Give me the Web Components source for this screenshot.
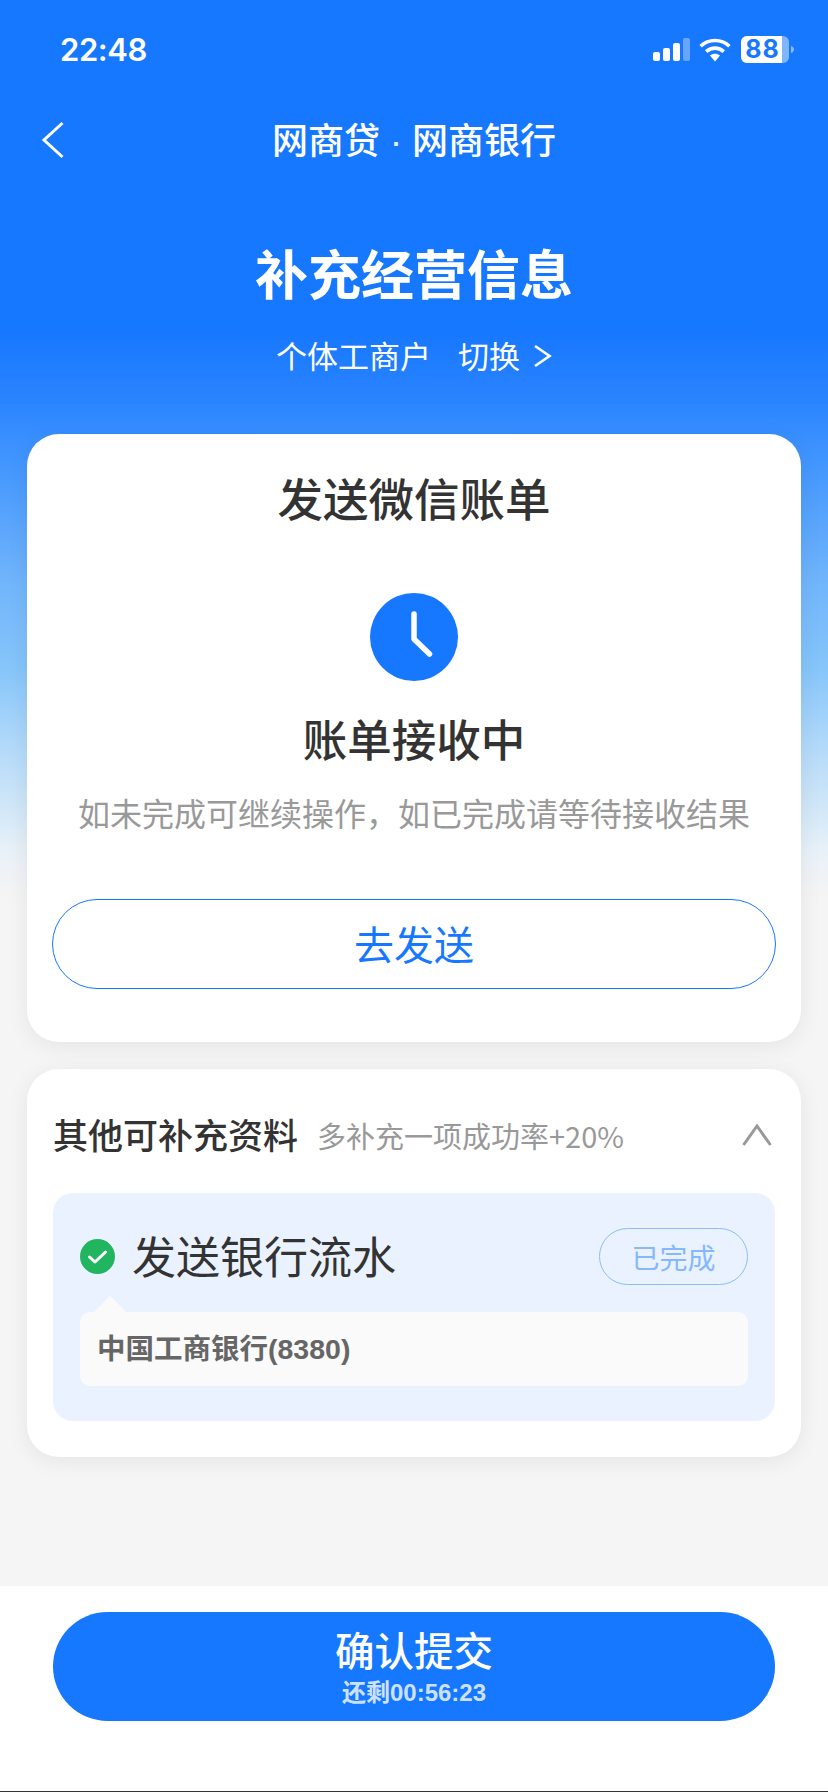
<!DOCTYPE html>
<html lang="zh"><head><meta charset="utf-8"><title>补充经营信息</title>
<style>
html,body{margin:0;padding:0;height:1792px;overflow:hidden}
body{font-family:"Noto Sans CJK SC","Liberation Sans",sans-serif;color:#333;background:#f5f5f5}
</style></head><body>
<app-page>
  <status-bar slot="top" time="22:48" battery="88"></status-bar>
  <nav-bar slot="top">网商贷 · 网商银行</nav-bar>
  <page-hero slot="top" heading="补充经营信息" type="个体工商户" action="切换"></page-hero>
  <bill-card heading="发送微信账单" state="账单接收中" hint="如未完成可继续操作，如已完成请等待接收结果" action="去发送"></bill-card>
  <extras-card heading="其他可补充资料" note="多补充一项成功率+20%">
    <done-item heading="发送银行流水" badge="已完成" detail="中国工商银行(8380)"></done-item>
  </extras-card>
  <submit-bar slot="bottom" label="确认提交" countdown="还剩00:56:23"></submit-bar>
</app-page>
<script>
function def(name, html){
  customElements.define(name, class extends HTMLElement{
    connectedCallback(){
      if(this.shadowRoot) return;
      const a={}; for(const at of this.attributes) a[at.name]=at.value;
      this.attachShadow({mode:'open'}).innerHTML = html.replace(/\{\{(\w+)\}\}/g,(m,k)=>a[k]||'');
    }
  });
}
def('app-page',`<style>
:host{display:flex;flex-direction:column;width:828px;height:1792px;
background:linear-gradient(180deg,#1677ff 0,#1677ff 330px,#2a84ff 400px,#3a90ff 440px,#72b6fb 586px,#85c5fa 667px,#b4dafa 749px,#c8e3f8 790px,#e8f1f8 851px,#f4f4f5 892px,#f5f5f5 905px,#f5f5f5 100%)}
.main{display:flex;flex-direction:column;gap:27px;padding:0 27px;flex:none}
::slotted([slot=bottom]){margin-top:auto}
</style><slot name="top"></slot><div class="main"><slot></slot></div><slot name="bottom"></slot>`);

def('status-bar',`<style>
:host{display:flex;align-items:center;justify-content:space-between;height:100px;padding:0 34px 0 60px;box-sizing:border-box;color:#fff}
.t{font:600 31px/40px Inter,"Liberation Sans",sans-serif;letter-spacing:-.4px}
.r{display:flex;align-items:center;margin-top:-1px}
svg{display:block}
.b{position:relative;width:53px;height:27px;margin-left:10px}
.b span{position:absolute;left:0;top:0;width:48px;height:27px;display:flex;align-items:center;justify-content:center;font:700 25px/27px Inter,"Liberation Sans",sans-serif;color:#1677ff;letter-spacing:1px;padding-right:5px;box-sizing:border-box}
</style><div class="t">{{time}}</div><div class="r">
<svg width="37" height="23" viewBox="0 0 37 23" fill="#fff"><rect x="0" y="14" width="7" height="9" rx="2"/><rect x="10" y="10" width="7" height="13" rx="2"/><rect x="20" y="5" width="7" height="18" rx="2"/><rect x="30" y="0" width="7" height="23" rx="2" fill-opacity=".35"/></svg>
<svg style="margin-left:9px" width="32" height="24" viewBox="0 0 32 24"><g fill="none" stroke="#fff" stroke-width="3.6"><path d="M1.6 8.2C9.6.6 22.4.6 30.4 8.2"/><path d="M7.2 13.6c5-4.6 12.6-4.6 17.6 0"/></g><path d="M11 17.6c3-2.4 7-2.4 10 0L16 23.5z" fill="#fff"/></svg>
<div class="b"><svg width="53" height="27" viewBox="0 0 53 27"><rect width="48" height="27" rx="6" fill="#fff" fill-opacity=".45"/><path d="M6 0h35v27H6a6 6 0 0 1-6-6V6a6 6 0 0 1 6-6z" fill="#fff"/><path d="M50 10c2 .6 3 2 3 3.500s-1 2.900-3 3.500z" fill="#fff" fill-opacity=".5"/></svg><span>{{battery}}</span></div>
</div>`);

def('nav-bar',`<style>
:host{display:flex;align-items:center;justify-content:center;position:relative;height:80px;color:#fff;font-family:"Liberation Sans","Noto Sans CJK SC",sans-serif;font-weight:500;font-size:36px;line-height:50px}
div{margin-top:3px;white-space:pre}
svg{position:absolute;left:41px;top:21px}
</style><svg width="24" height="38" viewBox="0 0 24 38" fill="none" stroke="#fff" stroke-width="3"><path d="M21.500 2 3 19l18.500 17"/></svg><div><slot></slot></div>`);

def('page-hero',`<style>
:host{display:flex;flex-direction:column;align-items:center;color:#fff;padding-top:62px;margin-bottom:59px}
h1{margin:0;font-size:53px;font-weight:700;line-height:60px}
.s{display:flex;align-items:center;margin-top:33px;font-size:31px;line-height:40px}
.a{margin-left:27px}
svg{margin-left:13px;margin-top:2px}
</style><h1>{{heading}}</h1><div class="s"><span>{{type}}</span><span class="a">{{action}}</span>
<svg width="19" height="24" viewBox="0 0 19 24" fill="none" stroke="#fff" stroke-width="2.600"><path d="M2 2l14.500 10L2 22"/></svg></div>`);

def('bill-card',`<style>
:host{display:flex;flex-direction:column;align-items:center;background:#fff;border-radius:32px;padding:33px 25px 53px;box-shadow:0 4px 22px rgba(0,0,0,.07)}
h2{margin:0 0 4px;font-size:45.500px;font-weight:500;line-height:60px;color:#333}
svg{display:block;margin-top:62px}
.st{margin-top:27px;margin-bottom:4px;font-size:44.500px;font-weight:500;line-height:60px;color:#333}
.h{margin-top:18px;margin-bottom:4px;font-size:32px;line-height:44px;color:#999;white-space:nowrap}
.btn{margin-top:61px;align-self:stretch;height:90px;border:1px solid #1677ff;border-radius:45px;box-sizing:border-box;display:flex;align-items:center;justify-content:center;font-size:40px;line-height:54px;color:#1677ff;padding-bottom:3px}
</style><h2>{{heading}}</h2>
<svg width="88" height="88" viewBox="0 0 88 88"><circle cx="44" cy="44" r="44" fill="#1677ff"/><path d="M44 21v25l15.500 15" fill="none" stroke="#fff" stroke-width="5.500" stroke-linecap="round" stroke-linejoin="round"/></svg>
<div class="st">{{state}}</div><div class="h">{{hint}}</div><div class="btn">{{action}}</div>`);

def('extras-card',`<style>
:host{display:flex;flex-direction:column;background:#fff;border-radius:32px;padding:41px 26px 36px;box-shadow:0 4px 22px rgba(0,0,0,.07)}
.hd{display:flex;align-items:center;height:50px;margin-bottom:33px}
h3{margin:-2px 0 0;font-size:35px;font-weight:500;line-height:50px;color:#333}
.n{margin-left:19px;font-size:29px;color:#999;line-height:50px;flex:1}
svg{margin-right:3px}
</style><div class="hd"><h3>{{heading}}</h3><span class="n">{{note}}</span>
<svg width="30" height="22" viewBox="0 0 30 22" fill="none" stroke="#999" stroke-width="3"><path d="M1.500 21 15 2l13.500 19"/></svg></div><slot></slot>`);

def('done-item',`<style>
:host{display:block;background:#eaf2ff;border-radius:20px;padding:35px 27px}
.r{display:flex;align-items:center;height:57px}
.ic{display:block;flex:none}
.t{margin:0 0 3px 17px;font-size:44px;line-height:60px;color:#333;flex:1}
.b{width:149px;height:57px;box-sizing:border-box;border:1px solid #8cbcff;border-radius:29px;display:flex;align-items:center;justify-content:center;font-size:28px;color:#85b8ff}
.d{position:relative;margin-top:27px;height:74px;background:#fafafa;border-radius:10px;padding-left:17px;display:flex;align-items:center;color:#666}
.d span{font:700 28.500px/40px "Liberation Sans","Noto Sans CJK SC",sans-serif}
.tri{position:absolute;left:13px;top:-16px;display:block}
</style><div class="r"><svg class="ic" width="35" height="35" viewBox="0 0 35 35"><circle cx="17.500" cy="17.500" r="17.500" fill="#22b55f"/><path d="M9.500 18l5.500 5 10.500-10" fill="none" stroke="#fff" stroke-width="3" stroke-linecap="round" stroke-linejoin="round"/></svg>
<div class="t">{{heading}}</div><div class="b">{{badge}}</div></div>
<div class="d"><svg class="tri" width="34" height="17" viewBox="0 0 34 17"><path d="M0 17 15.500 1a2 2 0 0 1 3 0L34 17z" fill="#fafafa"/></svg><span>{{detail}}</span></div>`);

def('submit-bar',`<style>
:host{display:block;height:206px;box-sizing:border-box;background:#fff;padding:26px 53px 0;border-bottom:1px solid #333}
.btn{height:109px;border-radius:55px;background:#1677ff;display:flex;flex-direction:column;align-items:center;justify-content:center;color:#fff}
.a{font-size:39.500px;font-weight:500;line-height:50px;margin-top:-2px}
.b{font:700 24px/30px "Liberation Sans","Noto Sans CJK SC",sans-serif;color:rgba(255,255,255,.8);margin-top:4px}
</style><div class="btn"><div class="a">{{label}}</div><div class="b">{{countdown}}</div></div>`);
</script>
</body></html>
